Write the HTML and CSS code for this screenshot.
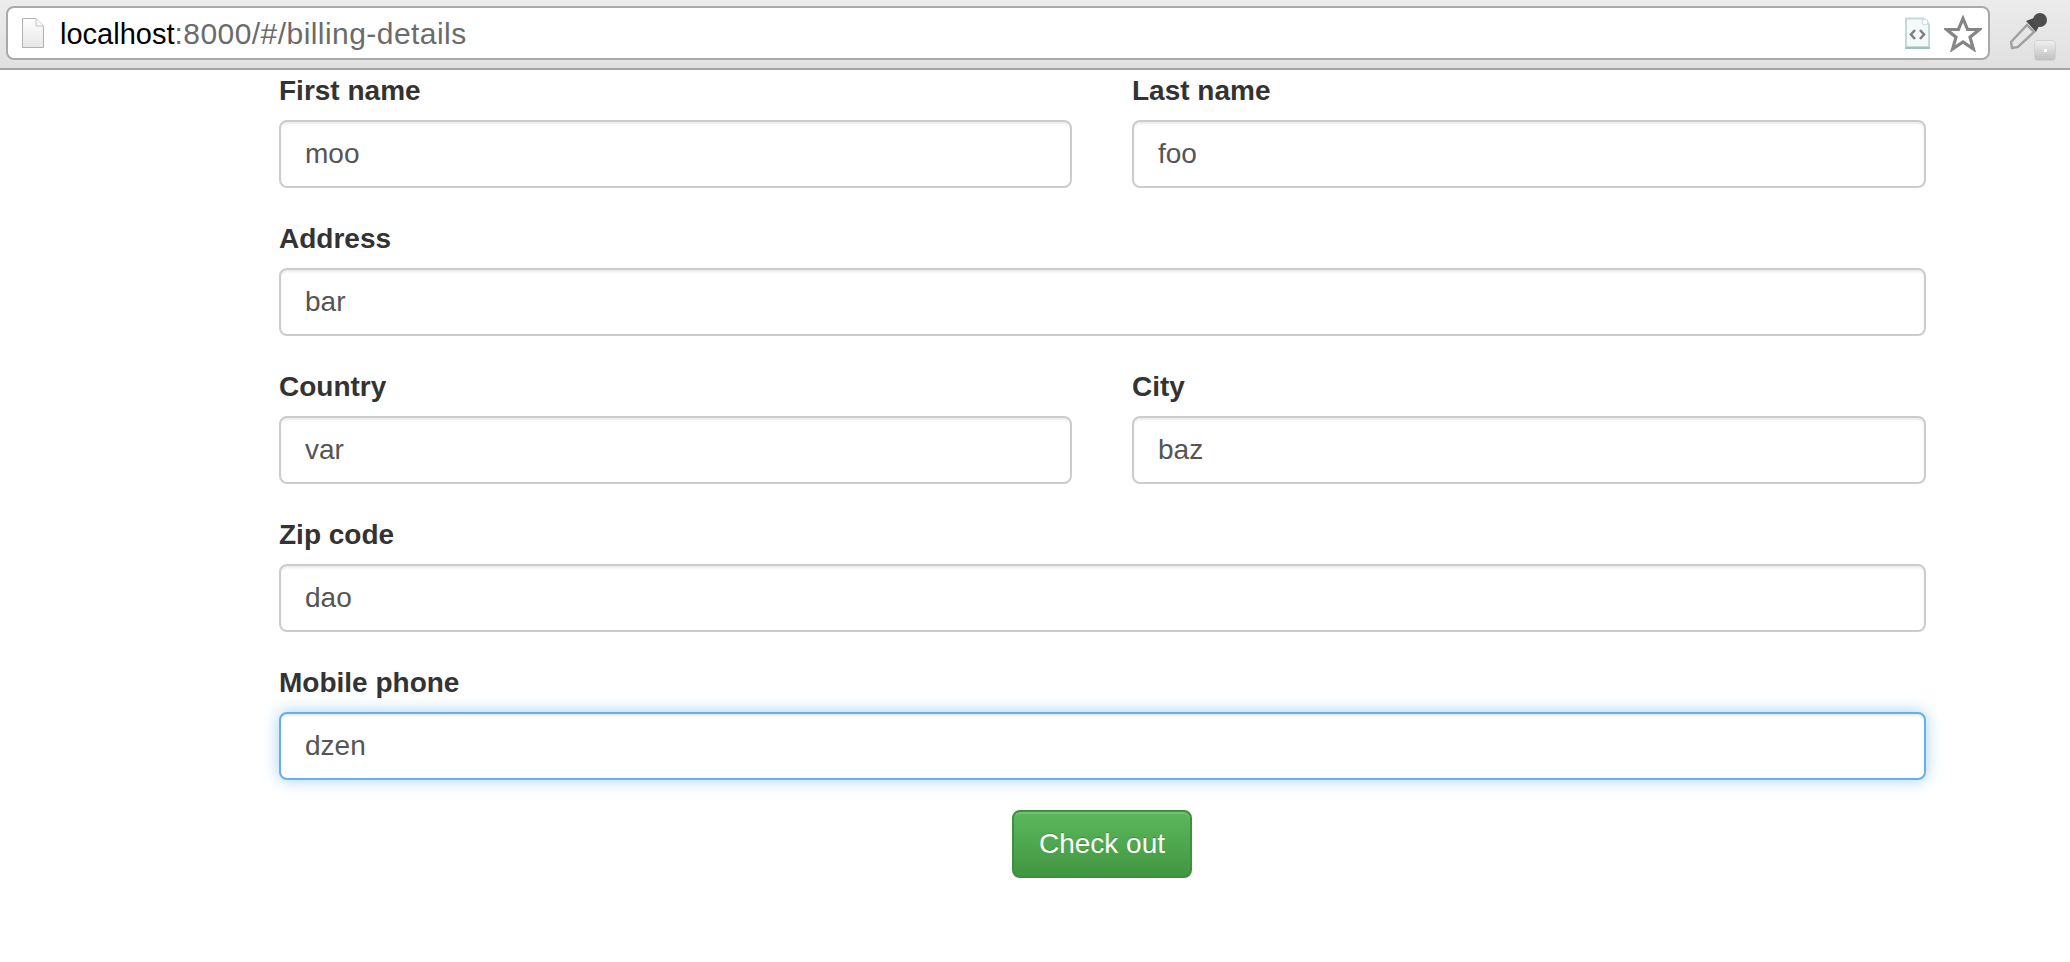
FILE: index.html
```html
<!DOCTYPE html>
<html lang="en">
<head>
    <meta charset="UTF-8">
    <title>Billing details</title>
    <link rel="stylesheet" href="styles.css">
</head>
<body>
    <header class="toolbar">
        <div class="omnibox">
            <svg class="omnibox__page" width="22" height="30" viewBox="0 0 22 30">
                <defs>
                    <linearGradient id="pageFill" x1="0" y1="0" x2="0" y2="1">
                        <stop offset="0" stop-color="#ffffff"/>
                        <stop offset="1" stop-color="#e6e6e6"/>
                    </linearGradient>
                </defs>
                <path d="M0.5 0.5H14L21.5 8V29.5H0.5Z" fill="url(#pageFill)" stroke="#b0b0b0"/>
                <path d="M14 0.5V8H21.5" fill="#f6f6f6" stroke="#c4c4c4"/>
            </svg>
            <div class="omnibox__url"><span class="omnibox__host">localhost</span>:8000/#/billing-details</div>
            <svg class="omnibox__source" width="27" height="33" viewBox="0 0 27 33">
                <path d="M2 1.5H19L25 7.5V30H2Z" fill="#f4fafa" stroke="#c3dad9" stroke-width="2"/>
                <path d="M1 31H26" stroke="#a3bfbe" stroke-width="2"/>
                <circle cx="21" cy="5" r="3" fill="#ffffff" stroke="#c8d8d8"/>
                <path d="M11 13L7 17.5L11 22M16 13L20 17.5L16 22" fill="none" stroke="#808080" stroke-width="2.6"/>
            </svg>
            <svg class="omnibox__star" width="38" height="37" viewBox="0 0 38 37">
                <path d="M19 3.5L23.6 14.5H35.5L26 22.2L29.4 34L19 27L8.6 34L12 22.2L2.5 14.5H14.4Z" fill="#fff" stroke="#858585" stroke-width="3.2"/>
            </svg>
        </div>
        <svg class="toolbar__dropper" width="46" height="50" viewBox="0 0 46 50">
            <defs>
                <linearGradient id="swatchFill" x1="0" y1="0" x2="0" y2="1">
                    <stop offset="0" stop-color="#f0f0f0"/>
                    <stop offset="1" stop-color="#bfbfbf"/>
                </linearGradient>
            </defs>
            <path d="M1 31L17 14L24 21L8 36L2 37Z" fill="#e6e6e6" stroke="#a0a0a0" stroke-width="2.4"/>
            <path d="M16 10L24 7L30 13L26 21Z" fill="#4a4a4a"/>
            <circle cx="30" cy="9" r="7" fill="#4e4e4e"/>
            <rect x="24.5" y="29.5" width="21" height="20" rx="3" fill="url(#swatchFill)" stroke="#d2d2d2"/>
            <rect x="34" y="38" width="3" height="3" fill="#fff"/>
        </svg>
    </header>

    <form class="billing">
        <div class="billing__row billing__row--split">
            <div class="field">
                <label class="field__label">First name</label>
                <input class="field__input" type="text" value="moo">
            </div>
            <div class="field">
                <label class="field__label">Last name</label>
                <input class="field__input" type="text" value="foo">
            </div>
        </div>
        <div class="billing__row">
            <div class="field">
                <label class="field__label">Address</label>
                <input class="field__input" type="text" value="bar">
            </div>
        </div>
        <div class="billing__row billing__row--split">
            <div class="field">
                <label class="field__label">Country</label>
                <input class="field__input" type="text" value="var">
            </div>
            <div class="field">
                <label class="field__label">City</label>
                <input class="field__input" type="text" value="baz">
            </div>
        </div>
        <div class="billing__row">
            <div class="field">
                <label class="field__label">Zip code</label>
                <input class="field__input" type="text" value="dao">
            </div>
        </div>
        <div class="billing__row">
            <div class="field">
                <label class="field__label">Mobile phone</label>
                <input class="field__input is-focused" type="text" value="dzen">
            </div>
        </div>
        <div class="billing__actions">
            <button class="btn-checkout" type="button">Check out</button>
        </div>
    </form>
</body>
</html>
```

FILE: styles.css
```css
* { box-sizing: border-box; }

body {
  margin: 0;
  background: #fff;
  font-family: "Liberation Sans", Arial, sans-serif;
  color: #333;
}

/* browser chrome */
.toolbar {
  display: flex;
  align-items: center;
  height: 70px;
  padding: 0 14px 2px 6px;
  background: linear-gradient(#ececec, #e0e0e0);
  border-bottom: 2px solid #a6a6a6;
}

.omnibox {
  display: flex;
  align-items: center;
  flex: 1;
  height: 54px;
  padding: 0 6px 0 14px;
  background: #fff;
  border: 2px solid #a9a9a9;
  border-radius: 8px;
}

.omnibox__page { flex: none; }

.omnibox__url {
  flex: 1;
  margin-left: 16px;
  padding-top: 2px;
  font-size: 30px;
  letter-spacing: 0.45px;
  color: #6b6b6b;
}

.omnibox__host {
  font-size: 29px;
  letter-spacing: 0;
  color: #000;
}

.omnibox__source { margin-right: 13px; }

.toolbar__dropper {
  margin-top: 6px;
  margin-left: 20px;
}

/* form */
.billing {
  width: 1647px;
  margin-left: 279px;
}

.billing__row {
  display: grid;
  grid-template-columns: 1fr;
  column-gap: 60px;
  margin-bottom: 30px;
}

.billing__row--split { grid-template-columns: 793px 1fr; }

.field__label {
  display: block;
  height: 40px;
  margin-bottom: 10px;
  font-size: 28px;
  font-weight: bold;
  line-height: 42px;
}

.field__input {
  display: block;
  width: 100%;
  height: 68px;
  padding: 0 24px;
  font-family: inherit;
  font-size: 28px;
  color: #555;
  background: #fff;
  border: 2px solid #ccc;
  border-radius: 8px;
  box-shadow: inset 0 2px 2px rgba(0, 0, 0, 0.075);
  outline: none;
}

.field__input.is-focused {
  border-color: #66afe9;
  box-shadow: inset 0 2px 2px rgba(0, 0, 0, 0.075), 0 0 16px rgba(102, 175, 233, 0.6);
}

.billing__actions {
  display: flex;
  justify-content: center;
  padding-right: 1px;
}

.btn-checkout {
  width: 180px;
  height: 68px;
  padding: 0;
  font-family: inherit;
  font-size: 28px;
  color: #fff;
  text-shadow: 0 -1px 0 rgba(0, 0, 0, 0.2);
  background: linear-gradient(#5cb85c, #419641);
  border: 2px solid #3e8f3e;
  border-radius: 8px;
  box-shadow: inset 0 2px 0 rgba(255, 255, 255, 0.15), 0 2px 2px rgba(0, 0, 0, 0.075);
}
```
